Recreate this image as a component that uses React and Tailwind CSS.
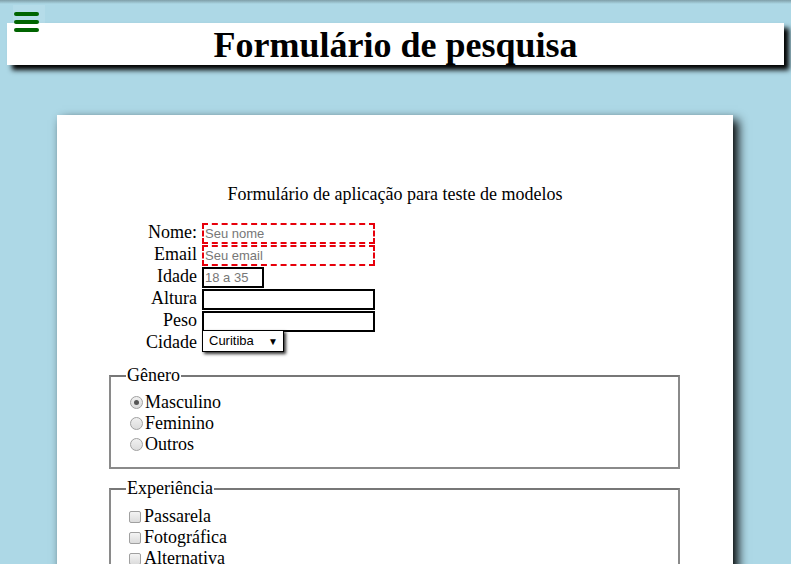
import React from 'react';

const rowLabel = "text-right pr-[5px] pt-[5px] leading-[17px] h-[22px]";
const textInput = "h-[21px] border-2 px-[1px] font-['Liberation_Sans',sans-serif] text-[13px] placeholder:text-[#777] outline-none";

export default function App() {
  return (
    <div className="relative min-h-screen bg-[#add8e6] font-['Liberation_Serif',serif] text-black overflow-hidden">
      <div className="absolute top-0 left-0 right-0 h-[4px] bg-gradient-to-b from-[#7f9ea8] to-transparent" />

      {/* cabeçalho */}
      <div className="pt-[23px] px-[7px]">
        <header className="h-[42px] bg-white shadow-[5px_5px_5px_#000]">
          <h1 className="text-center text-[36px] font-bold leading-[44px]">Formulário de pesquisa</h1>
        </header>
      </div>

      <div className="absolute left-[13px] top-[5px] w-[32px] h-[28px] bg-white/10" />
      <button className="absolute left-[14px] top-[12px] w-[25px] flex flex-col gap-[4px]">
        <span className="block w-[25px] h-[4px] rounded-full bg-[#006400]" />
        <span className="block w-[25px] h-[4px] rounded-full bg-[#006400]" />
        <span className="block w-[25px] h-[4px] rounded-full bg-[#006400]" />
      </button>

      {/* cartão */}
      <main className="mt-[50px] ml-[57px] w-[676px] h-[520px] bg-white shadow-[5px_5px_10px_#000] pt-[68px]">
        <p className="text-center text-[18px] leading-[22px]">Formulário de aplicação para teste de modelos</p>

        <div className="mt-[14px] grid grid-cols-[145px_1fr] text-[18px]">
          <label className={rowLabel}>Nome:</label>
          <div className="h-[22px]">
            <input placeholder="Seu nome" className={`${textInput} w-[173px] border-dashed border-red-600`} />
          </div>
          <label className={rowLabel}>Email</label>
          <div className="h-[22px]">
            <input placeholder="Seu email" className={`${textInput} w-[173px] border-dashed border-red-600`} />
          </div>
          <label className={rowLabel}>Idade</label>
          <div className="h-[22px]">
            <input placeholder="18 a 35" className={`${textInput} w-[62px] border-black`} />
          </div>
          <label className={rowLabel}>Altura</label>
          <div className="h-[22px]">
            <input className={`${textInput} w-[173px] border-black`} />
          </div>
          <label className={rowLabel}>Peso</label>
          <div className="h-[22px]">
            <input className={`${textInput} w-[173px] border-black`} />
          </div>
          <label className={rowLabel}>Cidade</label>
          <div className="h-[22px] pt-[1px]">
            <div className="w-[82px] h-[22px] border border-black shadow-[2px_2px_3px_#333] flex items-center justify-between pl-[6px] pr-[5px] font-['Liberation_Sans',sans-serif] text-[13px] bg-white">
              <span>Curitiba</span>
              <span className="text-[10px]">▼</span>
            </div>
          </div>
        </div>

        <fieldset className="mt-[14px] ml-[52px] w-[571px] h-[104px] border-2 border-[#8a8a8a] border-t-[#777] pl-[19px] text-[18px] leading-[21px]">
          <legend className="px-[1px] -ml-[4px]">Gênero</legend>
          <div className="mt-[6px] flex flex-col">
            {['Masculino', 'Feminino', 'Outros'].map((g, i) => (
              <label key={g} className="flex items-center">
                <span className="w-[13px] h-[13px] mr-[2px] rounded-full border border-[#a0a0a0] bg-gradient-to-b from-[#f0f0f0] to-[#dcdcdc] flex items-center justify-center">
                  {i === 0 && <span className="w-[5px] h-[5px] rounded-full bg-[#555]" />}
                </span>
                {g}
              </label>
            ))}
          </div>
        </fieldset>

        <fieldset className="mt-[9px] ml-[52px] w-[571px] h-[120px] border-2 border-[#8a8a8a] border-t-[#777] pl-[18px] text-[18px] leading-[21px]">
          <legend className="px-[1px] -ml-[3px]">Experiência</legend>
          <div className="mt-[7px] flex flex-col">
            {['Passarela', 'Fotográfica', 'Alternativa'].map((g) => (
              <label key={g} className="flex items-center">
                <span className="w-[12px] h-[12px] mr-[3px] rounded-[2px] border border-[#a0a0a0] bg-gradient-to-b from-[#f4f4f4] to-[#dcdcdc]" />
                {g}
              </label>
            ))}
          </div>
        </fieldset>
      </main>
    </div>
  );
}
